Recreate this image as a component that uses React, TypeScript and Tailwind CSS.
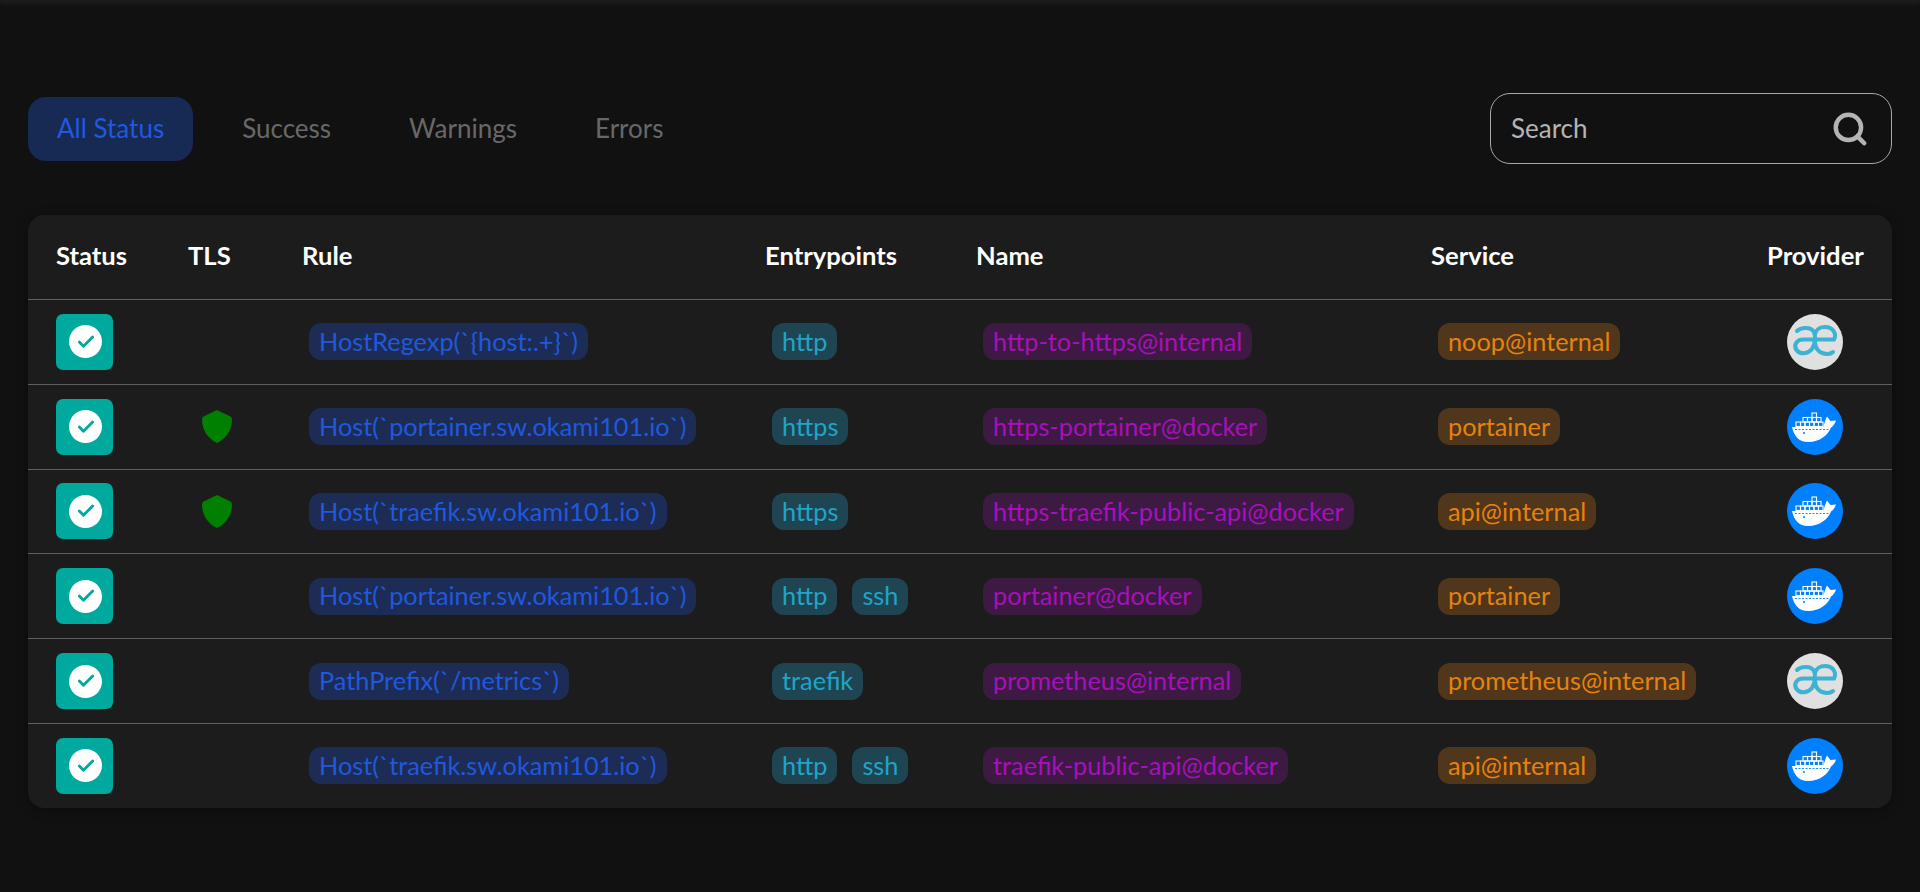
import { Check, Search } from 'lucide-react';

type Route = {
  tls?: boolean;
  rule: string;
  entrypoints: string[];
  name: string;
  service: string;
  provider: 'internal' | 'docker';
};

const routes: Route[] = [
  { rule: 'HostRegexp(`{host:.+}`)', entrypoints: ['http'], name: 'http-to-https@internal', service: 'noop@internal', provider: 'internal' },
  { tls: true, rule: 'Host(`portainer.sw.okami101.io`)', entrypoints: ['https'], name: 'https-portainer@docker', service: 'portainer', provider: 'docker' },
  { tls: true, rule: 'Host(`traefik.sw.okami101.io`)', entrypoints: ['https'], name: 'https-traefik-public-api@docker', service: 'api@internal', provider: 'docker' },
  { rule: 'Host(`portainer.sw.okami101.io`)', entrypoints: ['http', 'ssh'], name: 'portainer@docker', service: 'portainer', provider: 'docker' },
  { rule: 'PathPrefix(`/metrics`)', entrypoints: ['traefik'], name: 'prometheus@internal', service: 'prometheus@internal', provider: 'internal' },
  { rule: 'Host(`traefik.sw.okami101.io`)', entrypoints: ['http', 'ssh'], name: 'traefik-public-api@docker', service: 'api@internal', provider: 'docker' },
];

const tabs = ['Success', 'Warnings', 'Errors'];
const columns = ['Status', 'TLS', 'Rule', 'Entrypoints', 'Name', 'Service', 'Provider'];
const rowGrid = 'grid grid-cols-[132px_114px_463px_211px_455px_336px_153px]';

function Tag({ className, children }: { className: string; children: string }) {
  return <span className={`inline-flex h-[37px] items-center rounded-xl px-[10px] whitespace-nowrap ${className}`}>{children}</span>;
}

function ShieldIcon() {
  return (
    <svg width="30" height="33" viewBox="0 0 30 33" fill="#008000">
      <path d="M15 0 L28.5 6.5 Q30 7.5 30 9.5 C30 20 24 29 15 33 C6 29 0 20 0 9.5 Q0 7.5 1.5 6.5 Z" />
    </svg>
  );
}

function InternalLogo() {
  return (
    <svg width="56" height="56" viewBox="0 0 56 56">
      <circle cx="28" cy="28" r="28" fill="#e0e0e0" />
      <path
        d="M10 17 C14 13 24 12.5 27 18 C29 22 28 30 25 35 C21 40 13 41 9.5 36 C6 31 10 25.5 16 25.5 H47 C50 20 46 13 38 13 C33 13 29 16 28 20 M28 28 C28 35 33 40 40 40 C43 40 45 39 46 38"
        fill="none"
        stroke="#3db2d2"
        strokeWidth="4"
        strokeLinecap="round"
      />
    </svg>
  );
}

function DockerLogo() {
  const boxes = [
    [25, 14], [16, 18.5], [20.5, 18.5], [25, 18.5], [29.5, 18.5],
    [9, 23], [13.5, 23], [18, 23], [22.5, 23], [27, 23], [31.5, 23],
  ];
  return (
    <svg width="56" height="56" viewBox="0 0 56 56">
      <circle cx="28" cy="28" r="28" fill="#0080ff" />
      {boxes.map(([x, y]) => (
        <rect key={`${x}-${y}`} x={x} y={y} width="4.5" height="4.5" fill="none" stroke="#fff" strokeWidth="1.1" />
      ))}
      <path d="M5 28 H36 C37.5 25 38 21 40 17.5 L43.5 22 L49 21.5 C48 24.5 46.5 27 44 28.5 C41 36 33 43 21 43 C12 43 7 37 5 28 Z" fill="#fff" />
      <path d="M8 30.5 H42" stroke="#0080ff" strokeWidth="0.9" strokeDasharray="2 1.5" />
      <circle cx="17" cy="34" r="1" fill="#0080ff" />
    </svg>
  );
}

export default function App() {
  return (
    <div className="min-h-screen bg-[#111111] px-7 pt-[93px] font-['Lato','Noto_Sans',sans-serif] text-[25.3px]">
      <div className="fixed inset-x-0 top-0 h-0 shadow-[0_0_6px_2px_rgba(70,70,70,0.5)]" />

      <div className="flex items-center justify-between">
        <div className="flex items-center gap-5 text-[26px]">
          <button type="button" className="h-16 rounded-[18px] bg-[#172a54] px-[29px] text-[#2058de]">All Status</button>
          {tabs.map((tab) => (
            <button key={tab} type="button" className="h-16 px-[29px] text-[#686868]">{tab}</button>
          ))}
        </div>
        <div className="flex h-[71px] w-[402px] items-center justify-between rounded-[20px] border border-[#a8a8a8] pl-[20px] pr-[22px] text-[26px]">
          <span className="text-[#b4b4b4]">Search</span>
          <Search className="h-[38px] w-[38px] text-[#b4b4b4]" strokeWidth={2.8} />
        </div>
      </div>

      <div className="mt-[51px] rounded-2xl bg-[#1c1c1c] shadow-[0_2px_12px_rgba(0,0,0,0.35)]">
        <div className={`${rowGrid} h-[84px] items-center pb-[4px] text-[25.6px] font-bold text-white`}>
          {columns.map((col) => (
            <div key={col} className="pl-7">{col}</div>
          ))}
        </div>
        {routes.map((route) => (
          <div key={route.rule + route.name} className={`${rowGrid} h-[84.8px] items-center border-t border-[#5f5f5f]`}>
            <div className="pl-7">
              <div className="flex h-14 w-[57px] items-center justify-center rounded-[7px] bg-[#00a99d] pl-[2px]">
                <div className="flex h-[33px] w-[33px] items-center justify-center rounded-full bg-white">
                  <Check className="h-[20px] w-[20px] text-[#00a99d]" strokeWidth={3.4} />
                </div>
              </div>
            </div>
            <div className="flex justify-center">{route.tls && <ShieldIcon />}</div>
            <div className="pl-[35px]">
              <Tag className="bg-[#1d2c54] text-[#2058de]">{route.rule}</Tag>
            </div>
            <div className="flex gap-[15px] pl-[35px]">
              {route.entrypoints.map((ep) => (
                <Tag key={ep} className="bg-[#1f4552] text-[#20a4c8]">{ep}</Tag>
              ))}
            </div>
            <div className="pl-[35px]">
              <Tag className="bg-[#3c1a42] text-[#a810bc]">{route.name}</Tag>
            </div>
            <div className="pl-[35px]">
              <Tag className="bg-[#50361a] text-[#e58210]">{route.service}</Tag>
            </div>
            <div className="flex justify-center pr-[2px]">
              {route.provider === 'docker' ? <DockerLogo /> : <InternalLogo />}
            </div>
          </div>
        ))}
      </div>
    </div>
  );
}
